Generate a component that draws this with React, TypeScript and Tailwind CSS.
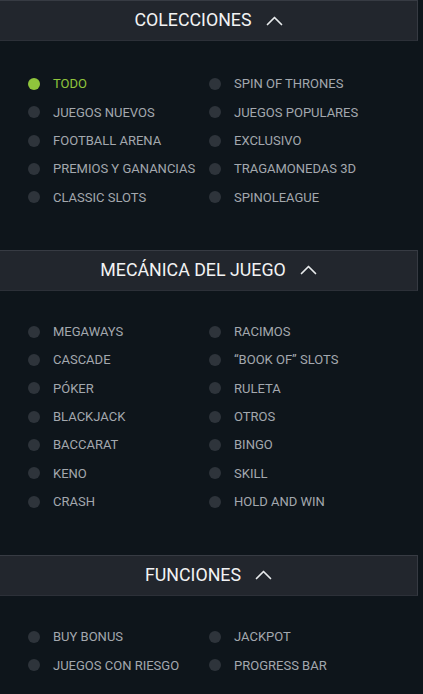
import React from "react";

type Section = {
  title: string;
  items: string[];
  active?: string;
  pad: string;
};

const sections: Section[] = [
  {
    title: "COLECCIONES",
    active: "TODO",
    pad: "pt-[29px] pb-[38px]",
    items: [
      "TODO",
      "SPIN OF THRONES",
      "JUEGOS NUEVOS",
      "JUEGOS POPULARES",
      "FOOTBALL ARENA",
      "EXCLUSIVO",
      "PREMIOS Y GANANCIAS",
      "TRAGAMONEDAS 3D",
      "CLASSIC SLOTS",
      "SPINOLEAGUE",
    ],
  },
  {
    title: "MECÁNICA DEL JUEGO",
    pad: "pt-[27px] pb-[39px]",
    items: [
      "MEGAWAYS",
      "RACIMOS",
      "CASCADE",
      "\u201CBOOK OF\u201D SLOTS",
      "PÓKER",
      "RULETA",
      "BLACKJACK",
      "OTROS",
      "BACCARAT",
      "BINGO",
      "KENO",
      "SKILL",
      "CRASH",
      "HOLD AND WIN",
    ],
  },
  {
    title: "FUNCIONES",
    pad: "pt-[27px] pb-[40px]",
    items: ["BUY BONUS", "JACKPOT", "JUEGOS CON RIESGO", "PROGRESS BAR"],
  },
];

function Chevron() {
  return (
    <svg width="17" height="10" viewBox="0 0 17 10" fill="none">
      <path
        d="M1.5 8.5 L8.5 1.5 L15.5 8.5"
        stroke="#e8eaec"
        strokeWidth="1.7"
        strokeLinecap="round"
        strokeLinejoin="round"
      />
    </svg>
  );
}

export default function App() {
  return (
    <div
      className="w-[423px] h-[694px] overflow-hidden bg-[#0e151b]"
      style={{ fontFamily: "Roboto, 'Liberation Sans', sans-serif" }}
    >
      {sections.map((s) => (
        <div key={s.title}>
          <div className="mr-[5px] h-[41px] flex items-center justify-center gap-[14px] bg-[#22262d] border-t border-b border-t-[#373b43] border-b-[#2c3038] border-r border-r-[#363a42]">
            <span className="text-[17.8px] text-[#f2f3f4]">{s.title}</span>
            <Chevron />
          </div>
          <div className={`${s.pad} pl-[28px] grid grid-cols-[181px_1fr]`}>
            {s.items.map((it) => {
              const on = it === s.active;
              return (
                <div key={it} className="h-[28.33px] flex items-center gap-[13px]">
                  <span
                    className={
                      on
                        ? "w-[12px] h-[12px] rounded-full bg-[#8fc53c]"
                        : "w-[12px] h-[12px] rounded-full bg-[#2e343b]"
                    }
                  />
                  <span
                    className={
                      on
                        ? "text-[13px] text-[#8fc53c]"
                        : "text-[13px] text-[#a3a8ae]"
                    }
                  >
                    {it}
                  </span>
                </div>
              );
            })}
          </div>
        </div>
      ))}
    </div>
  );
}
